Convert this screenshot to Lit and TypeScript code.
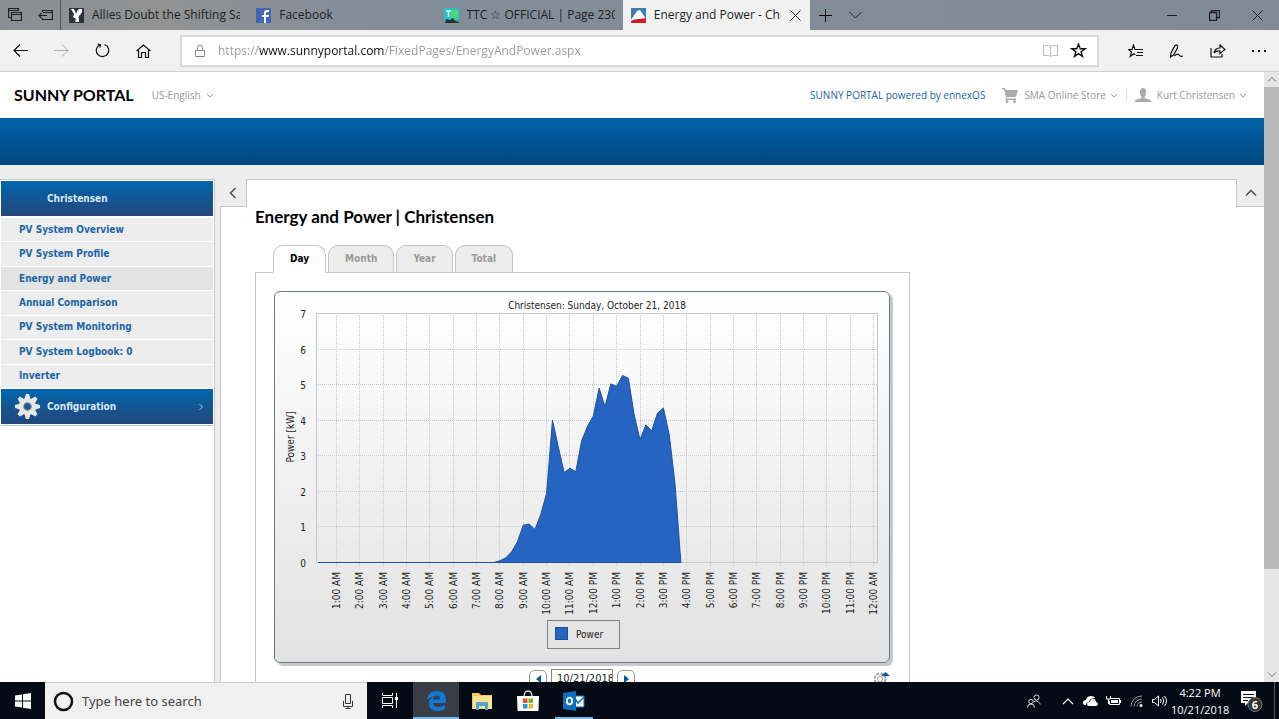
import { LitElement, html, svg, css } from "lit";
import { customElement } from "lit/decorators.js";
import { classMap } from "lit/directives/class-map.js";

const chevron = svg`<path d="M1 2l3 3 3-3" fill="none" stroke="currentColor" />`;

@customElement("browser-chrome")
class BrowserChrome extends LitElement {
  static styles = css`
    :host { display: block; font-family: "Open Sans", "Noto Sans", sans-serif; color: #1b1f24; }
    button { font: inherit; color: inherit; background: none; border: 0; padding: 0; display: grid; place-items: center; }
    svg { display: block; fill: none; stroke: currentColor; }
    .strip { display: flex; height: 30px; background: linear-gradient(90deg, #8a8e93, #929292 12%, #828d9a 30%, #808b98); }
    .tool { width: 30px; }
    .tabs { display: flex; flex: 0 1 749px; min-width: 0; border-left: 1px solid #50565e; }
    .tab { flex: 1; min-width: 0; display: flex; align-items: center; gap: 8px; padding: 0 8px; font-size: 12px; line-height: 16px; }
    .tab .icon { flex: none; }
    .tab .label { flex: 1; min-width: 0; overflow: hidden; white-space: nowrap; display: block; text-align: left; font-size: 12px; }
    .tab.active { background: #f1f1f1; }
    .spacer { flex: 1; }
    .win { width: 43px; }
    .bar { display: flex; align-items: center; height: 41px; background: #f1f1f1; border-bottom: 1px solid #cfcfcf; color: #111; }
    .nav { width: 41px; height: 40px; }
    .off { color: #aaa; }
    .address { flex: 1; display: flex; align-items: center; margin: 0 16px; height: 32px; box-sizing: border-box; border: 2px solid #dadada; background: #fff; gap: 11px; padding: 0 10px 0 12px; }
    .url { flex: 1; min-width: 0; border: 0; outline: 0; padding: 0; font: 12px "Open Sans", "Noto Sans", sans-serif; color: transparent;
      background: linear-gradient(90deg, #999 40px, #111 40px, #111 166px, #999 166px); -webkit-background-clip: text; background-clip: text; }
    .lock { color: #888; }
    .read { color: #bbb; }
  `;

  tabs = [
    { label: "Allies Doubt the Shifting Sands", icon: svg`<path d="M0 0h15v15H0z" fill="#2f3236" stroke="none"/><path d="M2 1q3-1 4 2l1 3q1-4 3-5h3q1 3-2 6-2 1-1 4v3H6l1-3-3-2 1-3z" fill="#fff" stroke="none"/>` },
    { label: "Facebook", icon: svg`<path d="M0 0h15v15H0z" fill="#4267b2" stroke="none"/><path d="M8 15V9H6V7h2V5q0-3 3-3h2v2h-1q-2 0-2 1v2h3l-.4 2H10v6z" fill="#fff" stroke="none"/>` },
    { label: "TTC ☆ OFFICIAL | Page 2303", icon: svg`<path d="M0 0h15v12H0z" fill="#27c2c4" stroke="none"/><path d="M7 2h7v8H7z" fill="#4bd977" stroke="none"/><path d="M2 3h5M4.500 3v6" stroke="#e8ffff" stroke-width="1.500"/><path d="M1 15l1-4 4 1 3-2 2 3 4 1v1z" fill="#263238" stroke="none"/>` },
    { label: "Energy and Power - Christensen", active: true, icon: svg`<path d="M0 0h15v15H0z" fill="#3c7eac" stroke="none"/><path d="M0 12L6 3l3-1 6 9v4H0z" fill="#fff" stroke="none"/><path d="M0 15v-2q4-2 7-2t8-1v5z" fill="#cb1d2b" stroke="none"/>` },
  ];

  render() {
    return html`
      <div class="strip">
        <button class="tool" aria-label="Tabs set aside"><svg width="14" height="14"><path d="M3.500 9.500h-3v-9h10v2M.5 2.500h10M3.500 4.500h10v8h-10zM3.500 6.500h10" stroke-width="1.200"/></svg></button>
        <button class="tool" aria-label="Set tabs aside"><svg width="15" height="12"><path d="M4.500 3V1.500h10v9h-10V9M5 3.500h9M1 6.500h8M3.500 4L1 6.500 3.500 9" stroke-width="1.200"/></svg></button>
        <div class="tabs">
          ${this.tabs.map((t) => html`
            <div class=${classMap({ tab: true, active: !!t.active })}>
              <svg class="icon" width="15" height="15">${t.icon}</svg>
              <button class="label">${t.label}</button>
              ${t.active ? html`<button aria-label="Close tab"><svg width="13" height="11"><path d="M1.500.5l10 10M11.500.5l-10 10"/></svg></button>` : ""}
            </div>`)}
        </div>
        <button class="tool" aria-label="New tab"><svg width="13" height="13"><path d="M6.500 0v13M0 6.500h13" stroke="#000"/></svg></button>
        <button class="tool" aria-label="Tab previews"><svg width="13" height="8"><path d="M.5 1l6 6 6-6"/></svg></button>
        <div class="spacer"></div>
        <button class="win" aria-label="Minimize"><svg width="10" height="10"><path d="M0 5.500h10"/></svg></button>
        <button class="win" aria-label="Restore"><svg width="11" height="11"><path d="M.5 2.500h7v8h-7zM2.500 2V.5h8v7H8" stroke-width="1.300"/></svg></button>
        <button class="win" aria-label="Close"><svg width="11" height="11"><path d="M.5.5l10 10M10.500.5l-10 10"/></svg></button>
      </div>
      <div class="bar">
        <button class="nav" aria-label="Back"><svg width="15" height="13"><path d="M1 6.500h14M7 .5l-6 6 6 6" stroke-width="1.200"/></svg></button>
        <button class="nav off" aria-label="Forward"><svg width="15" height="13"><path d="M0 6.500h14M8 .5l6 6-6 6"/></svg></button>
        <button class="nav" aria-label="Refresh"><svg width="15" height="15"><path d="M9.500 1.500a6.200 6.200 0 1 1-4.500.2M2.500 1l3 .7-.6 3" stroke-width="1.200"/></svg></button>
        <button class="nav" aria-label="Home"><svg width="15" height="14"><path d="M.5 7l7-6 7 6M2.500 6v7.500h3v-5h4v5h3V6" stroke-width="1.200"/></svg></button>
        <div class="address">
          <svg class="lock" width="13" height="14"><path d="M1.500 6.500h9v6h-9zM3.500 6V3.500q0-2.500 2.500-2.500t2.500 2.500V6"/></svg>
          <input class="url" aria-label="Address" value="https://www.sunnyportal.com/FixedPages/EnergyAndPower.aspx" />
          <svg class="read" width="16" height="14"><path d="M.5 1.500h5l2 1 2-1h5v10h-5l-2 1-2-1h-5zM7.500 2v10"/></svg>
          <svg width="17" height="15"><path d="M8.500 1l1.700 4.800h4.800l-3.900 3 1.400 4.700-4-2.800-4 2.800 1.400-4.700L2 5.800h4.800z" stroke-width="1.400"/></svg>
        </div>
        <button class="nav" aria-label="Favorites"><svg width="16" height="14"><path d="M9 5.500H7L5.500 1 4.200 5.500H.5l3 2.500-1.200 4.500 3.500-2.700 1.500 1M8 5.500h7M9 8.500h6M8 11.500h7" stroke-width="1.200"/></svg></button>
        <button class="nav" aria-label="Add notes"><svg width="15" height="14"><path d="M1.500 13l.5-4L6 1.500q2-1.500 2.500.5v2L4.500 11zM5.500 12q3-3 4.500-1t4 1" stroke-width="1.200"/></svg></button>
        <button class="nav" aria-label="Share"><svg width="16" height="14"><path d="M1 4v9h11v-3M4 9q1-5 6-5V1l5 4.500L10 9.500V7Q6 6.500 4 9z" stroke-width="1.200"/></svg></button>
        <button class="nav" aria-label="More"><svg width="14" height="4"><path d="M0 1h2v2H0zM6 1h2v2H6zM12 1h2v2h-2z" fill="#111" stroke="none"/></svg></button>
      </div>`;
  }
}

@customElement("power-chart")
class PowerChart extends LitElement {
  static styles = css`
    :host { display: block; border: 1px solid #6b7784; border-radius: 6px; box-shadow: 3px 3px 1px #c5c8cc; background: linear-gradient(#fff, #e2e2e2); }
    svg { display: block; width: 100%; font: 10px "DejaVu Sans Condensed", "DejaVu Sans", sans-serif; fill: #222; }
    .grid { stroke: #c4cacd; stroke-dasharray: 1 1; }
    .frame { fill: none; stroke: #c2c7ca; }
    .area { fill: #2565c1; stroke: #1d4f9c; }
    .key { fill: #2565c1; stroke: #1d4f9c; }
    .box { fill: none; stroke: #7c828a; }
  `;

  /* First sample of the rising curve is 7:45 AM; one value per quarter hour, in kW. */
  start = 7.75;
  samples = [0, 0.05, 0.13, 0.3, 0.58, 1.05, 1.08, 0.93, 1.35, 1.95, 4, 3.25, 2.53, 2.65, 2.55, 3.42, 3.83, 4.12, 4.9, 4.38, 5.02, 4.95, 5.26, 5.18, 4.15, 3.45, 3.87, 3.7, 4.2, 4.34, 3.6, 2.2, 0];

  x(hour: number) { return 61 + ((hour - 1) * 537) / 23; }
  y(kw: number) { return 270 - (kw * 249) / 7; }
  label(hour: number) { return `${hour % 12 || 12}:00 ${hour >= 12 && hour < 24 ? "PM" : "AM"}`; }

  render() {
    const hours = Array.from({ length: 24 }, (_, i) => i + 1);
    const levels = [0, 1, 2, 3, 4, 5, 6, 7];
    const points = this.samples.map((v, i) => `${this.x(this.start + i / 4) + 0.5},${this.y(v) + 0.5}`).join(" ");
    return html`
      <svg viewBox="0 0 614 370" role="img" aria-label="Power by time of day">
        <text x="322" y="17" text-anchor="middle">Christensen: Sunday, October 21, 2018</text>
        <text transform="translate(19 145) rotate(-90)" text-anchor="middle">Power [kW]</text>
        <path class="frame" d="M41.500 270.500V21.500H602.500V270.500z" />
        ${levels.map((v) => svg`
          <path class="grid" d="M41 ${Math.round(this.y(v)) + 0.5}H602" />
          <text x="31" y=${Math.round(this.y(v)) + 5} text-anchor="end">${v}</text>`)}
        ${hours.map((h) => svg`
          <path class="grid" d="M${Math.round(this.x(h)) + 0.5} 21V275" />
          <text transform="translate(${Math.round(this.x(h)) + 4} 280) rotate(-90)" text-anchor="end">${this.label(h)}</text>`)}
        <polygon class="area" points="43,270.5 ${points} 43,270.5" />
        <rect class="box" x="272.500" y="328.500" width="72" height="28" />
        <rect class="key" x="280.500" y="335.500" width="12" height="12" />
        <text x="301" y="346">Power</text>
      </svg>`;
  }
}

@customElement("sunny-portal")
class SunnyPortal extends LitElement {
  static styles = css`
    :host { display: flex; min-height: 0; overflow: hidden; background: #ededed; font-family: "DejaVu Sans Condensed", "DejaVu Sans", sans-serif; font-size: 10px; line-height: 16px; }
    button, select, input { font: inherit; color: inherit; }
    button { background: none; border: 0; padding: 0; }
    a { color: inherit; text-decoration: none; }
    svg { display: block; flex: none; }
    .page { flex: 1; min-width: 0; display: flex; flex-direction: column; overflow: hidden; }
    .head { display: flex; align-items: center; height: 46px; flex: none; padding: 0 17px 0 14px; background: #fff; color: #999; font-family: "Open Sans", sans-serif; }
    .brand { font: bold 16px/24px Lato, sans-serif; color: #000; margin-right: 18px; }
    .lang { appearance: none; border: 0; background: none; padding: 0; }
    .menu { display: flex; align-items: center; gap: 4px; }
    .spacer { flex: 1; }
    .ennex { color: #1a639e; margin-right: 17px; }
    .menu .lead { margin-right: 2px; }
    .line { width: 1px; height: 12px; background: #ddd; margin: 0 8px; }
    .band { flex: none; height: 47px; background: linear-gradient(#0062a8, #00467f); }
    .body { flex: 1; min-height: 0; display: flex; gap: 5px; margin-top: 14px; }
    .side { flex: none; width: 213px; border-top: 1px solid #c8c8c8; border-right: 1px solid #c8c8c8; background: #fff; padding: 1px 0 0 1px; font-weight: bold; }
    .bar { display: flex; align-items: center; box-sizing: border-box; height: 35px; margin-right: 1px; padding-right: 9px; color: #d7e6f3; background: linear-gradient(#0066ad, #24477a); }
    .slot { width: 46px; padding-left: 14px; box-sizing: border-box; }
    .list { list-style: none; margin: 0; height: 173px; box-sizing: border-box; padding: 2px 0 0; display: flex; flex-direction: column; }
    .item { flex: 1; display: flex; align-items: center; margin-right: 1px; padding-left: 18px; background: #ededed; color: #1b66a5; border-bottom: 1px solid #fff; box-sizing: border-box; }
    .item.on { background: #e3e3e3; }
    .foot { border-bottom: 1px solid #b4c8dc; height: 1px; margin-right: 1px; }
    .main { flex: 1; min-width: 0; display: flex; flex-direction: column; }
    .top { display: flex; flex: none; height: 28px; }
    .edge { flex: 1; background: #fff; border-top: 1px solid #c8c8c8; }
    .notch { display: grid; place-items: center; width: 27px; box-sizing: border-box; border-bottom: 1px solid #c8c8c8; color: #555; }
    .notch.left { border-right: 1px solid #c8c8c8; }
    .notch.right { border-left: 1px solid #c8c8c8; width: 28px; }
    .content { flex: 1; min-height: 0; overflow: hidden; background: #fff; border-left: 1px solid #c8c8c8; padding: 0 34px; }
    .title { font: bold 17px/20px Lato, sans-serif; margin: 0 0 18px; color: #000; }
    .frame { max-width: 655px; }
    .tabs { display: flex; gap: 2px; padding-left: 18px; }
    .tab { height: 28px; padding: 0 16px; border: 1px solid #c4c4c4; border-radius: 10px 10px 0 0; background: #ededed; color: #999; font-weight: bold; }
    .tab.on { position: relative; background: #fff; border-bottom-color: #fff; color: #000; }
    .panel { border: 1px solid #c4c4c4; margin-top: -1px; padding: 18px 19px 20px 18px; height: 460px; }
    .tools { display: grid; grid-template-columns: 1fr auto 1fr; align-items: center; margin-top: 6px; }
    .date { display: flex; align-items: center; gap: 4px; color: #222; }
    .step { width: 18px; height: 17px; border: 1px solid #999; border-radius: 5px; display: grid; place-items: center; }
    .day { width: 62px; height: 19px; box-sizing: border-box; border: 1px solid #888; padding: 0 0 0 5px; font-size: 11px; line-height: 16px; }
    .set { justify-self: end; }
    .scroll { flex: none; width: 15px; display: flex; flex-direction: column; background: #e6e6e6; color: #777; }
    .end { height: 15px; display: grid; place-items: center; }
    .thumb { flex: 0 0 79%; background: #b9b9b9; }
  `;

  menu = ["PV System Overview", "PV System Profile", "Energy and Power", "Annual Comparison", "PV System Monitoring", "PV System Logbook: 0", "Inverter"];
  ranges = ["Day", "Month", "Year", "Total"];

  gear(size: number, fill: string, hole: string) {
    return html`<svg width=${size} height=${size} viewBox="-12 -12 24 24">
      ${[0, 45, 90, 135].map((a) => svg`<path d="M-1.500-12h3l1.500 5v14l-1.500 5h-3l-1.500-5v-14z" fill=${fill} transform="rotate(${a})"/>`)}
      <circle r="8" fill=${fill}/><circle r="3.600" fill=${hole} stroke="#8a8f96"/></svg>`;
  }

  render() {
    return html`
      <div class="page">
        <header class="head">
          <span class="brand">SUNNY PORTAL</span>
          <label class="menu"><select class="lang" aria-label="Language"><option>US-English</option></select><svg width="8" height="7">${chevron}</svg></label>
          <span class="spacer"></span>
          <a class="ennex" href="#">SUNNY PORTAL powered by ennexOS</a>
          <button class="menu">
            <svg class="lead" width="16" height="15"><path d="M0 0h3l1 2h12l-2 7H5v1.500h9V12H3.500L4 9 2 1.500H0z" fill="#aaa"/><circle cx="5" cy="13.500" r="1.500" fill="#aaa"/><circle cx="12.500" cy="13.500" r="1.500" fill="#aaa"/></svg>
            SMA Online Store <svg width="8" height="7">${chevron}</svg>
          </button>
          <span class="line"></span>
          <button class="menu">
            <svg class="lead" width="16" height="14"><path d="M5 4q0-4 3-4t3 4-1.500 5v1l6 2q.5.5.5 2H0q0-1.500.5-2l6-2V9Q5 8 5 4z" fill="#aaa"/></svg>
            Kurt Christensen <svg width="8" height="7">${chevron}</svg>
          </button>
        </header>
        <div class="band"></div>
        <div class="body">
          <nav class="side">
            <div class="bar"><span class="slot"></span>Christensen</div>
            <ul class="list">
              ${this.menu.map((m) => html`<li class=${classMap({ item: true, on: m === "Energy and Power" })}><a href="#">${m}</a></li>`)}
            </ul>
            <a class="bar" href="#"><span class="slot">${this.gear(25, "#e6e6e6", "#1a5692")}</span>Configuration<span class="spacer"></span>
              <svg width="6" height="8"><path d="M1.500 1l3 3-3 3" fill="none" stroke="#a9cbe8"/></svg></a>
            <div class="foot"></div>
          </nav>
          <main class="main">
            <div class="top">
              <button class="notch left" aria-label="Hide navigation"><svg width="8" height="12"><path d="M6.500 1l-5 5 5 5" fill="none" stroke="currentColor" stroke-width="1.600"/></svg></button>
              <div class="edge"></div>
              <button class="notch right" aria-label="Hide header"><svg width="12" height="8"><path d="M1 6.500l5-5 5 5" fill="none" stroke="currentColor" stroke-width="1.600"/></svg></button>
            </div>
            <div class="content">
              <h1 class="title">Energy and Power | Christensen</h1>
              <div class="frame">
                <div class="tabs">${this.ranges.map((r) => html`<button class=${classMap({ tab: true, on: r === "Day" })}>${r}</button>`)}</div>
                <div class="panel">
                  <power-chart></power-chart>
                  <div class="tools">
                    <span></span>
                    <div class="date">
                      <button class="step" aria-label="Previous day"><svg width="5" height="8"><path d="M5 0v8L0 4z" fill="#0a569c"/></svg></button>
                      <input class="day" aria-label="Date" value="10/21/2018" />
                      <button class="step" aria-label="Next day"><svg width="5" height="8"><path d="M0 0v8l5-4z" fill="#0a569c"/></svg></button>
                    </div>
                    <button class="set" aria-label="Chart settings">
                      <svg width="18" height="16"><circle cx="8" cy="8" r="5.500" fill="#eee" stroke="#aaa" stroke-width="2" stroke-dasharray="3 1.300"/><circle cx="8" cy="8" r="2.500" fill="#fff" stroke="#aaa"/><path d="M9 5l4.500-4L18 5z" fill="#0a569c"/></svg>
                    </button>
                  </div>
                </div>
              </div>
            </div>
          </main>
        </div>
      </div>
      <div class="scroll">
        <div class="end"><svg width="10" height="7"><path d="M1 5.500l4-4 4 4" fill="none" stroke="currentColor"/></svg></div>
        <div class="thumb"></div>
        <span class="spacer"></span>
        <div class="end"><svg width="10" height="7"><path d="M1 1.500l4 4 4-4" fill="none" stroke="currentColor"/></svg></div>
      </div>`;
  }
}

@customElement("task-bar")
class TaskBar extends LitElement {
  static styles = css`
    :host { display: flex; height: 37px; background: #050b14; color: #fff; font-family: "Noto Sans", "Open Sans", sans-serif; }
    button { font: inherit; color: inherit; background: none; border: 0; padding: 0; display: grid; place-items: center; }
    svg { display: block; flex: none; }
    .start { width: 45px; }
    .search { display: flex; align-items: center; gap: 8px; flex: 0 1 322px; box-sizing: border-box; padding: 0 13px 0 8px; background: #f0f0f0; border-top: 1px solid #ccc; color: #222; }
    .query { flex: 1; min-width: 0; border: 0; outline: 0; padding: 0; background: none; font: 13px/18px "Noto Sans", sans-serif; }
    .query::placeholder { color: #444; }
    .app { width: 46px; box-sizing: border-box; border-bottom: 2px solid transparent; border-top: 2px solid transparent; }
    .app.current { background: #393e46; border-bottom-color: #76b9ed; border-top-color: #393e46; }
    .app.open { background: linear-gradient(#76b9ed, #76b9ed) center bottom / 38px 2px no-repeat border-box; }
    .spacer { flex: 1; }
    .tray { width: 23px; }
    .people { width: 45px; }
    .clock { display: block; width: 58px; font: 11px/17px "Open Sans", sans-serif; text-align: center; }
    .note { width: 46px; border-right: 1px solid #555; margin-right: 4px; }
    .count { font: bold 11px "Noto Sans", sans-serif; fill: #fff; }
  `;

  render() {
    return html`
      <button class="start" aria-label="Start"><svg width="16" height="16"><path d="M0 2.500L7 1.500V7.500H0zM8 1.300L16 0v7.500H8zM0 8.500h7v6L0 13.500zM8 8.500h8V16L8 14.700z" fill="#fff"/></svg></button>
      <label class="search">
        <svg width="21" height="21"><circle cx="10.500" cy="10.500" r="8.500" fill="none" stroke="#111" stroke-width="2.500"/></svg>
        <input class="query" aria-label="Search" placeholder="Type here to search" />
        <svg width="12" height="17" fill="none" stroke="#333"><path d="M3.500 1.500h5v9h-5zM1.500 8v5.500h9V8M6 13.500V16M3.500 15.500h5"/></svg>
      </label>
      <button class="app" aria-label="Task view"><svg width="17" height="15" fill="none" stroke="#fff"><path d="M.5 0v2.500h10V0M.5 4.500h10v6H.5zM.5 15v-2.500h10V15M14.500 0v15"/><path d="M13 4h3v3h-3z" fill="#fff" stroke="none"/></svg></button>
      <button class="app current" aria-label="Edge"><svg width="19" height="20"><path d="M0 9Q1 0 10 0t9 9v3H6q0 4 5.500 4 3.500 0 6.500-2v4q-3 2-7.500 2Q2 20 2 12q0-4 5-7-4 1-7 4zM6 8.500h7Q13 4.500 9.700 4.500T6 8.500z" fill="#0f7bd6" fill-rule="evenodd"/></svg></button>
      <button class="app" aria-label="File Explorer"><svg width="20" height="18"><path d="M0 1h7l2 2h11v14H0z" fill="#f0c95c"/><path d="M1 4h19v13H1z" fill="#fbe292"/><path d="M4 18v-7q0-1 1-1h10q1 0 1 1v7h-3v-4H7v4z" fill="#4ba9cf"/></svg></button>
      <button class="app" aria-label="Store"><svg width="22" height="22"><path d="M7 7q0-6 4-6t4 6" fill="none" stroke="#ddd" stroke-width="1.300"/><path d="M0 6h22l-.5 14q0 1-1 1h-19q-1 0-1-1z" fill="#fff"/><path d="M6 8.500h4.500V13H6z" fill="#e8502a"/><path d="M11.500 8.500H16V13h-4.500z" fill="#7bb526"/><path d="M6 14h4.500v4.500H6z" fill="#1b9de2"/><path d="M11.500 14H16v4.500h-4.500z" fill="#f6b51d"/></svg></button>
      <button class="app open" aria-label="Outlook"><svg width="22" height="20"><path d="M10 5h11v11H10z" fill="#fff" stroke="#0f6fbf"/><path d="M12 8l3 4 6-6" fill="none" stroke="#0f6fbf" stroke-width="1.500"/><path d="M0 2l13-2v20L0 18z" fill="#0f6fbf"/><ellipse cx="6.500" cy="10" rx="2.600" ry="3.300" fill="none" stroke="#fff" stroke-width="1.800"/></svg></button>
      <span class="spacer"></span>
      <button class="people" aria-label="People"><svg width="14" height="14" fill="none" stroke="#ddd"><circle cx="9.500" cy="3.500" r="2.500"/><circle cx="4" cy="7.500" r="2.200"/><path d="M.5 13.500q0-3.500 3.500-3.500t3.500 3.500M7 8q2-3 6.500 2"/></svg></button>
      <button class="tray" aria-label="Show hidden icons"><svg width="12" height="8"><path d="M1 7l5-5 5 5" fill="none" stroke="#fff" stroke-width="1.200"/></svg></button>
      <button class="tray" aria-label="OneDrive"><svg width="15" height="10"><path d="M0 7q0-3 3-3 1-4 5-4 3 0 4 2-5 0-6 4-3 0-3 3Q0 9 0 7z" fill="#fff"/><path d="M4 8q0-2 3-2 1-4 4-3 2 .5 2 3 2 .5 2 2t-2 2H6q-2 0-2-2z" fill="#fff"/></svg></button>
      <button class="tray" aria-label="Battery"><svg width="15" height="11"><path d="M5 3.500h8.500v6H3.500V6M14.500 5v3M.5 1v3h4V1M2.500 4v5" fill="none" stroke="#fff"/><path d="M5 5h7v3H5z" fill="#fff"/></svg></button>
      <button class="tray" aria-label="Wi-Fi"><svg width="13" height="12" fill="none"><path d="M1 11.500A10.500 10.500 0 0 1 12 1M4 11.500a8 8 0 0 1 8-7.500M7 11.500A5 5 0 0 1 12 7" stroke="#999"/><circle cx="11" cy="10.500" r="1.500" fill="#fff"/></svg></button>
      <button class="tray" aria-label="Volume"><svg width="16" height="12" fill="none" stroke="#fff"><path d="M.5 4.500h2L6.500 1v10l-4-3.500h-2zM8.500 4q1 2 0 4M10.500 2.500q2.500 3.500 0 7M12.500 1q4 5 0 10"/></svg></button>
      <button class="clock">4:22 PM<br />10/21/2018</button>
      <button class="note" aria-label="Notifications"><svg width="24" height="24"><path d="M1 2h15v12H8l-3 3v-3H1z" fill="#fff"/><path d="M3 5.500h11M3 8.500h11M3 11.500h5" stroke="#050b14"/><circle cx="15" cy="15.500" r="7" fill="#333" stroke="#777"/><text class="count" x="15" y="20" text-anchor="middle">6</text></svg></button>`;
  }
}

@customElement("app-root")
class AppRoot extends LitElement {
  static styles = css`
    :host { display: flex; flex-direction: column; height: 100vh; overflow: hidden; }
    .chrome, .tasks { flex: none; }
    .view { flex: 1; }
  `;

  render() {
    return html`
      <browser-chrome class="chrome"></browser-chrome>
      <sunny-portal class="view"></sunny-portal>
      <task-bar class="tasks"></task-bar>`;
  }
}
